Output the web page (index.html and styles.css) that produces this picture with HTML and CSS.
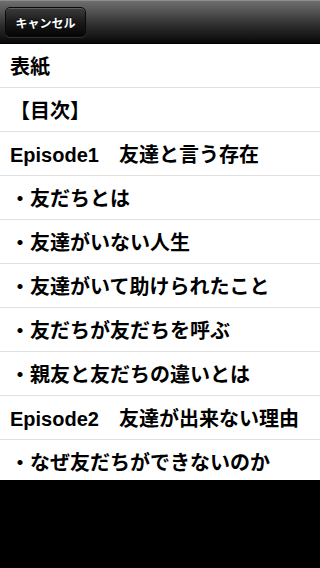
FILE: index.html
```html
<!DOCTYPE html>
<html lang="ja">
<head>
<meta charset="utf-8">
<meta name="viewport" content="width=320">
<link rel="stylesheet" href="styles.css">
</head>
<body>
<div class="screen">
  <header class="navbar">
    <button class="nav-btn">キャンセル</button>
  </header>
  <ul class="toc">
    <li class="row">表紙</li>
    <li class="row">【目次】</li>
    <li class="row">Episode1　友達と言う存在</li>
    <li class="row">・友だちとは</li>
    <li class="row">・友達がいない人生</li>
    <li class="row">・友達がいて助けられたこと</li>
    <li class="row">・友だちが友だちを呼ぶ</li>
    <li class="row">・親友と友だちの違いとは</li>
    <li class="row">Episode2　友達が出来ない理由</li>
    <li class="row">・なぜ友だちができないのか</li>
  </ul>
</div>
</body>
</html>
```
FILE: styles.css
```css
html, body {
  margin: 0;
  padding: 0;
  background: #000;
}
.screen {
  width: 320px;
  height: 568px;
  display: flex;
  flex-direction: column;
  background: #000;
  overflow: hidden;
  font-family: "Liberation Sans", "Noto Sans CJK JP", sans-serif;
}
.navbar {
  height: 44px;
  flex: none;
  box-sizing: border-box;
  display: flex;
  align-items: center;
  padding-left: 5px;
  background: linear-gradient(#6e6e6e 0px, #5a5a5a 8px, #2e2e2e 24px, #0c0c0c 40px, #000 44px);
  border-top: 1px solid #8e8e8e;
  border-bottom: 1px solid #000;
}
.nav-btn {
  height: 30px;
  width: 81px;
  padding: 0;
  box-sizing: border-box;
  border: 1px solid #0a0a0a;
  border-radius: 5px;
  background: linear-gradient(#3c3c3c, #1a1a1a 50%, #050505);
  box-shadow: inset 0 1px 0 rgba(255,255,255,0.18), 0 1px 0 rgba(255,255,255,0.12);
  color: #fff;
  font-family: "Noto Sans CJK JP", sans-serif;
  font-weight: 700;
  font-size: 12px;
  text-shadow: 0 -1px 0 #000;
}
.toc {
  list-style: none;
  margin: 0;
  padding: 0;
  height: 436px;
  flex: none;
  overflow: hidden;
  background: #fff;
}
.row {
  height: 44px;
  box-sizing: border-box;
  border-bottom: 1px solid #e0e0e0;
  display: flex;
  align-items: center;
  padding-left: 10px;
  font-size: 20px;
  font-weight: 700;
  color: #000;
  white-space: nowrap;
}
```
